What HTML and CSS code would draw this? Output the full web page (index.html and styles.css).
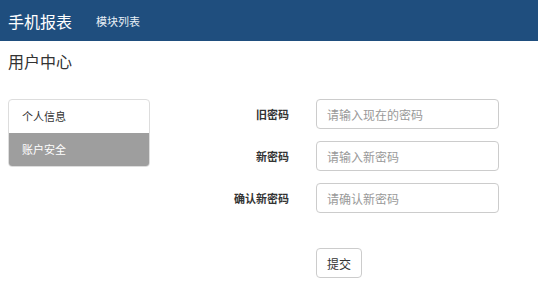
FILE: index.html
```html
<!DOCTYPE html>
<html lang="zh-CN">
<head>
  <meta charset="UTF-8" />
  <title>手机报表</title>
  <link rel="stylesheet" href="styles.css">
</head>
<body>
  <div class="navbar">
    <span class="brand">手机报表</span>
    <span class="nav-link">模块列表</span>
  </div>

  <div class="page">
    <h1 class="title">用户中心</h1>

    <div class="content">
      <div class="side-list">
        <div class="side-item">个人信息</div>
        <div class="side-item active">账户安全</div>
      </div>

      <form class="pwd-form">
        <div class="form-row">
          <label>旧密码</label>
          <input type="password" placeholder="请输入现在的密码">
        </div>
        <div class="form-row">
          <label>新密码</label>
          <input type="password" placeholder="请输入新密码">
        </div>
        <div class="form-row">
          <label>确认新密码</label>
          <input type="password" placeholder="请确认新密码">
        </div>
        <div class="form-row submit-row">
          <label></label>
          <button type="button" class="btn">提交</button>
        </div>
      </form>
    </div>
  </div>
</body>
</html>
```

FILE: styles.css
```css
body {
  margin: 0;
  font-family: "Noto Sans CJK SC", "Liberation Sans", sans-serif;
  color: #333;
  background-color: white;
}

.navbar {
  height: 41px;
  background-color: #1f4e7e;
  display: flex;
  align-items: center;
  padding: 0 8px;
  color: white;
}

.brand {
  font-size: 16px;
  margin-right: 24px;
}

.nav-link {
  font-size: 11px;
  color: #e8eef5;
}

.page {
  padding: 0 8px;
}

.title {
  margin: 10px 0 0;
  font-size: 16px;
  font-weight: normal;
  line-height: 20px;
}

.content {
  display: flex;
  margin-top: 28px;
}

.side-list {
  width: 142px;
  border: 1px solid #ddd;
  border-radius: 4px;
  overflow: hidden;
  align-self: flex-start;
  box-sizing: border-box;
}

.side-item {
  height: 33px;
  line-height: 33px;
  padding-left: 13px;
  font-size: 11px;
  color: #333;
}

.side-item.active {
  background-color: #9e9e9e;
  color: white;
}

.pwd-form {
  display: flex;
  flex-direction: column;
  gap: 12px;
}

.form-row {
  display: flex;
  align-items: center;
}

.form-row label {
  width: 139px;
  text-align: right;
  font-size: 11px;
  font-weight: bold;
  margin-right: 27px;
}

.form-row input {
  width: 183px;
  height: 30px;
  box-sizing: border-box;
  border: 1px solid #ccc;
  border-radius: 4px;
  padding: 0 10px;
  font-family: inherit;
  font-size: 12px;
  color: #555;
}

.form-row input::placeholder {
  color: #999;
}

.submit-row {
  margin-top: 23px;
}

.btn {
  height: 30px;
  padding: 0 10px;
  border: 1px solid #ccc;
  border-radius: 4px;
  background-color: white;
  font-family: inherit;
  font-size: 12px;
  color: #333;
}
```
